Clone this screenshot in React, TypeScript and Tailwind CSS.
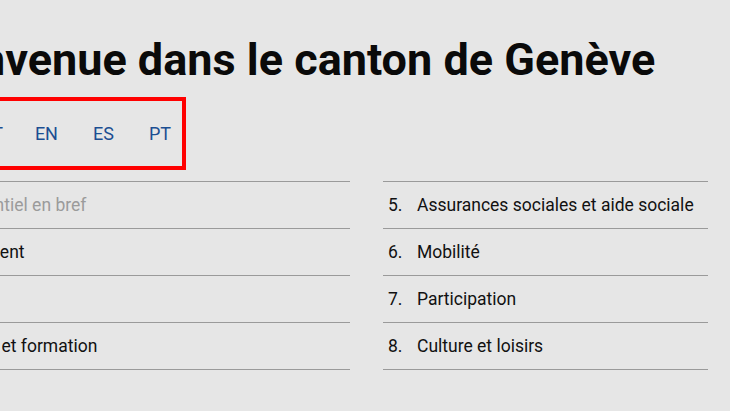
import React from "react";

const left = [
  { n: "1.", t: "L'essentiel en bref", muted: true },
  { n: "2.", t: "Logement" },
  { n: "3.", t: "Santé" },
  { n: "4.", t: "Travail et formation" },
];
const right = [
  { n: "5.", t: "Assurances sociales et aide sociale" },
  { n: "6.", t: "Mobilité" },
  { n: "7.", t: "Participation" },
  { n: "8.", t: "Culture et loisirs" },
];

function Col({ items }: { items: { n: string; t: string; muted?: boolean }[] }) {
  return (
    <ol className="border-t border-[#9a9a9a]">
      {items.map((it) => (
        <li
          key={it.n}
          className={`flex h-[47px] items-center border-b border-[#9a9a9a] pl-[5px] text-[17.5px] whitespace-nowrap ${
            it.muted ? "text-[#9b9b9b]" : "text-[#111]"
          }`}
        >
          <span className="w-[29px] shrink-0">{it.n}</span>
          <span>{it.t}</span>
        </li>
      ))}
    </ol>
  );
}

export default function App() {
  return (
    <div
      className="w-[730px] h-[411px] overflow-hidden bg-[#e6e6e6]"
      style={{ fontFamily: "Roboto, 'Noto Sans', sans-serif" }}
    >
      <div className="ml-[-85px] w-[815px]">
        <h1 className="pt-[37px] text-[45px] font-bold leading-none text-[#0a0a0a] whitespace-nowrap">
          Bienvenue dans le canton de Genève
        </h1>
        <div className="mt-[15px] flex h-[73px] w-[271px] items-center justify-end overflow-hidden border-4 border-[#ff0000] pr-[11px]">
          <div className="flex shrink-0 gap-[36px] text-[18px] text-[#1b4e92]">
            <span>FR</span>
            <span>DE</span>
            <span className="mr-[-4px]">IT</span>
            <span className="mr-[-1px]">EN</span>
            <span className="mr-[-1px]">ES</span>
            <span>PT</span>
          </div>
        </div>
        <div className="mt-[11px] ml-[-3px] grid grid-cols-[438px_325px] gap-x-[33px]">
          <Col items={left} />
          <Col items={right} />
        </div>
      </div>
    </div>
  );
}
